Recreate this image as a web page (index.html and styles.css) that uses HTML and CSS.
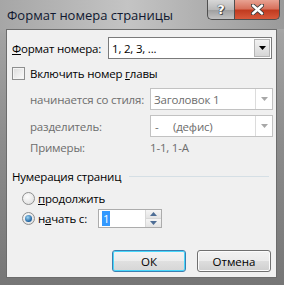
FILE: index.html
```html
<!DOCTYPE html>
<html lang="ru">
<head>
    <meta charset="UTF-8">
    <title>Формат номера страницы</title>
    <link rel="stylesheet" href="styles.css">
</head>
<body>
    <div class="window">
        <div class="titlebar">
            <span class="title">Формат номера страницы</span>
            <div class="caption-buttons">
                <span class="cap-btn help">?</span>
                <span class="cap-btn close">
                    <svg width="13" height="11" viewBox="0 0 13 11">
                        <path d="M2 1.5 L11 9.5 M11 1.5 L2 9.5" stroke="#3b3b3b" stroke-width="4.2" stroke-linecap="round"/>
                        <path d="M2 1.5 L11 9.5 M11 1.5 L2 9.5" stroke="#ffffff" stroke-width="2.4" stroke-linecap="round"/>
                    </svg>
                </span>
            </div>
        </div>

        <div class="client">
            <div class="row row-format">
                <span class="lbl-format"><u>Ф</u>ормат номера:</span>
                <div class="combo combo-main">
                    <span class="combo-text">1, 2, 3, ...</span>
                    <span class="combo-btn">
                        <svg width="7" height="4" viewBox="0 0 7 4"><path d="M0 0 H7 L3.5 4 Z" fill="#000"/></svg>
                    </span>
                </div>
            </div>

            <div class="row row-check">
                <span class="checkbox"></span>
                <span>Включить номер <u>г</u>лавы</span>
            </div>

            <div class="row row-sub">
                <span class="lbl-sub">начинается со стиля:</span>
                <div class="combo combo-off">
                    <span class="combo-text">Заголовок 1</span>
                    <span class="combo-btn">
                        <svg width="7" height="4" viewBox="0 0 7 4"><path d="M0 0 H7 L3.5 4 Z" fill="#a8a8a8"/></svg>
                    </span>
                </div>
            </div>

            <div class="row row-sub row-sep">
                <span class="lbl-sub">разделитель:</span>
                <div class="combo combo-off">
                    <span class="combo-text"><span class="dash">-</span>(дефис)</span>
                    <span class="combo-btn">
                        <svg width="7" height="4" viewBox="0 0 7 4"><path d="M0 0 H7 L3.5 4 Z" fill="#a8a8a8"/></svg>
                    </span>
                </div>
            </div>

            <div class="row row-sub row-examples">
                <span class="lbl-sub">Примеры:</span>
                <span class="examples">1-1, 1-А</span>
            </div>

            <div class="row row-group">
                <span>Нумерация страниц</span>
                <span class="group-line"></span>
            </div>

            <div class="row row-radio">
                <span class="radio"></span>
                <span><u>п</u>родолжить</span>
            </div>

            <div class="row row-radio row-start">
                <span class="radio checked"></span>
                <span class="lbl-start">н<u>а</u>чать с:</span>
                <div class="spin">
                    <span class="spin-value"><span class="selected">1</span></span>
                    <span class="spin-btns">
                        <span class="spin-btn">
                            <svg width="7" height="4" viewBox="0 0 7 4"><path d="M0 4 H7 L3.5 0 Z" fill="#4d6d95"/></svg>
                        </span>
                        <span class="spin-btn">
                            <svg width="7" height="4" viewBox="0 0 7 4"><path d="M0 0 H7 L3.5 4 Z" fill="#4d6d95"/></svg>
                        </span>
                    </span>
                </div>
            </div>

            <div class="row row-buttons">
                <button class="btn btn-default">ОК</button>
                <button class="btn">Отмена</button>
            </div>
        </div>
    </div>
</body>
</html>
```

FILE: styles.css
```css
body {
    margin: 0;
    font-family: "Open Sans", "Noto Sans", sans-serif;
    font-size: 11.5px;
    letter-spacing: -0.2px;
    color: #000;
}
.window {
    width: 284px;
    height: 285px;
    background: linear-gradient(to bottom, #b9b9b9 0%, #a3a3a3 12%, #8c8c8c 50%, #767676 100%);
    display: flex;
    flex-direction: column;
}
.titlebar {
    height: 29px;
    display: flex;
    align-items: flex-start;
    background: linear-gradient(to right, #a6a6a6 0%, #c4c4c4 45%, #b0b0b0 70%, #9a9a9a 100%);
}
.title {
    margin: 6px 0 0 7px;
    font-size: 13px;
    letter-spacing: 0;
    color: #101830;
    white-space: nowrap;
}
.caption-buttons {
    margin-left: auto;
    margin-right: 4px;
    display: flex;
}
.cap-btn {
    height: 19px;
    display: flex;
    align-items: center;
    justify-content: center;
    border: 1px solid #4f4f4f;
    border-top: none;
}
.help {
    width: 26px;
    border-radius: 0 0 0 5px;
    border-right: none;
    background: linear-gradient(to bottom, #d7d7d7 0%, #b9b9b9 50%, #9d9d9d 51%, #c2c2c2 100%);
    color: #fff;
    font-family: "DejaVu Sans", sans-serif;
    font-weight: bold;
    font-size: 13px;
    text-shadow: 0 0 1px #333, 0 0 1px #333, 1px 1px 0 #555;
}
.close {
    width: 44px;
    border-radius: 0 0 5px 0;
    background: linear-gradient(to bottom, #e8a292 0%, #d7725d 45%, #c13b20 55%, #d8593b 100%);
}
.client {
    height: 249px;
    box-sizing: border-box;
    margin: 0 7px 0 6px;
    border: 1px solid #6c6c6c;
    background: #f0f0f0;
    padding: 7px 5px 0 5px;
}
.row {
    display: flex;
    align-items: center;
    white-space: nowrap;
}
.row > span {
    flex-shrink: 0;
}
.row-format {
    height: 22px;
}
.lbl-format {
    width: 96px;
}
.combo {
    height: 22px;
    box-sizing: border-box;
    display: flex;
    align-items: center;
    background: #fff;
    flex-shrink: 0;
}
.combo-main {
    width: 164px;
    border: 1px solid #7a7a7a;
}
.combo-text {
    padding-left: 3px;
    flex: 1;
}
.combo-btn {
    width: 16px;
    height: 18px;
    margin-right: 1px;
    display: flex;
    align-items: center;
    justify-content: center;
}
.combo-main .combo-btn {
    background: linear-gradient(to bottom, #f2f2f2, #d6d6d6);
    border: 1px solid #b5b5b5;
    box-sizing: border-box;
}
.combo-off {
    width: 123px;
    margin-left: auto;
    margin-right: -1px;
    border: 1px solid #c2c2c2;
    color: #6d6d6d;
}
.combo-off .combo-btn {
    border-left: 1px solid #dcdcdc;
    height: 20px;
    margin-right: 0;
}
.row-check {
    height: 29px;
}
.checkbox {
    width: 13px;
    height: 13px;
    box-sizing: border-box;
    border: 1px solid #8e8f8f;
    background: linear-gradient(135deg, #dcdcdc, #fbfbfb);
    margin-right: 5px;
    box-shadow: inset 0 0 0 1px #f4f4f4;
}
.row-sub {
    height: 22px;
    padding-left: 18px;
    color: #6d6d6d;
}
.row-sep {
    margin-top: 5px;
}
.row-examples {
    height: 20px;
}
.lbl-sub {
    width: 120px;
}
.examples {
    color: #6d6d6d;
}
.dash {
    display: inline-block;
    width: 18px;
    padding-left: 1px;
}
.row-group {
    height: 20px;
    margin-top: 9px;
}
.row-group > .group-line {
    flex: 1 1 auto;
    height: 1px;
    margin-left: 8px;
    margin-right: 2px;
    background: #d5dfe5;
}
.row-radio {
    height: 20px;
    padding-left: 10px;
    margin-top: 2px;
}
.row-start {
    height: 21px;
    margin-top: 0;
}
.radio {
    width: 13px;
    height: 13px;
    box-sizing: border-box;
    border-radius: 50%;
    border: 1px solid #8e8f8f;
    background: radial-gradient(circle at 40% 35%, #fdfdfd, #dadada);
    margin-right: 3px;
    display: flex;
    align-items: center;
    justify-content: center;
}
.radio.checked::after {
    content: "";
    width: 7px;
    height: 7px;
    border-radius: 50%;
    background: radial-gradient(circle at 40% 35%, #9fd7f5, #1c5f9d 70%);
}
.lbl-start {
    width: 60px;
}
.spin {
    width: 64px;
    height: 19px;
    box-sizing: border-box;
    border: 1px solid #acacac;
    background: #fff;
    display: flex;
}
.spin-value {
    flex: 1;
    padding-left: 3px;
    display: flex;
    align-items: center;
}
.selected {
    background: #3399ff;
    color: #fff;
    padding: 0 1px;
    line-height: 15px;
}
.spin-btns {
    width: 16px;
    display: flex;
    flex-direction: column;
}
.spin-btn {
    flex: 1;
    display: flex;
    align-items: center;
    justify-content: center;
    border-left: 1px solid #d8d8d8;
    background: linear-gradient(to bottom, #f5f5f5, #e4e4e4);
}
.spin-btn + .spin-btn {
    border-top: 1px solid #d8d8d8;
}
.row-buttons {
    justify-content: flex-end;
    gap: 11px;
    margin-top: 21px;
    padding-right: 0;
}
.btn {
    width: 74px;
    height: 22px;
    font-family: "Open Sans", "Noto Sans", sans-serif;
    font-size: 11.5px;
    color: #000;
    border: 1px solid #707070;
    border-radius: 3px;
    background: linear-gradient(to bottom, #f2f2f2 0%, #ebebeb 50%, #dddddd 51%, #cfcfcf 100%);
    box-shadow: inset 0 0 0 1px #fcfcfc;
    padding: 0;
}
.btn-default {
    border-color: #3c7fb1;
    box-shadow: inset 0 0 0 1px #48d7fb;
    background: linear-gradient(to bottom, #f4f4f4 0%, #ececec 50%, #e0e0e0 51%, #d6d6d6 100%);
}
```
